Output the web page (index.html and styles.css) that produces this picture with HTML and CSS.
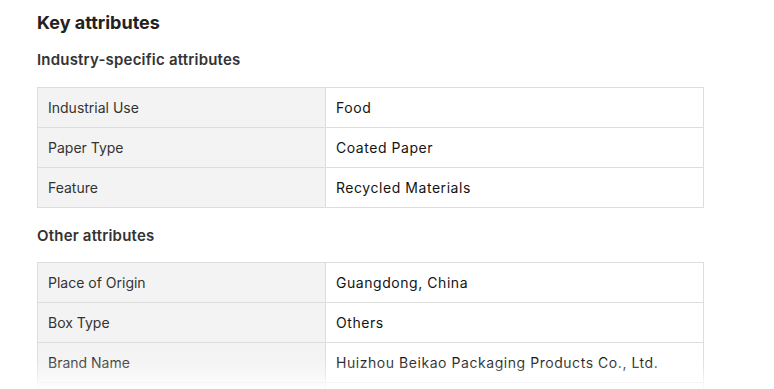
FILE: index.html
```html
<!DOCTYPE html>
<html>
<head>
<meta charset="utf-8">
<link rel="stylesheet" href="styles.css">
</head>
<body>
<div class="page">
  <h2 class="title">Key attributes</h2>
  <h3 class="subtitle first">Industry-specific attributes</h3>
  <table class="attrs">
    <tr><td class="key">Industrial Use</td><td class="val">Food</td></tr>
    <tr><td class="key">Paper Type</td><td class="val">Coated Paper</td></tr>
    <tr><td class="key">Feature</td><td class="val">Recycled Materials</td></tr>
  </table>
  <h3 class="subtitle">Other attributes</h3>
  <table class="attrs">
    <tr><td class="key">Place of Origin</td><td class="val">Guangdong, China</td></tr>
    <tr><td class="key">Box Type</td><td class="val">Others</td></tr>
    <tr><td class="key">Brand Name</td><td class="val">Huizhou Beikao Packaging Products Co., Ltd.</td></tr>
    <tr><td class="key"></td><td class="val"></td></tr>
  </table>
  <div class="fade"></div>
</div>
</body>
</html>
```
FILE: styles.css
```css
html, body {
  margin: 0;
  padding: 0;
  background: #fff;
}
.page {
  position: relative;
  height: 389px;
  overflow: hidden;
  padding: 0 0 0 37px;
  font-family: Inter, "Noto Sans", sans-serif;
  color: #222;
}
.title {
  margin: 0;
  padding-top: 11px;
  font-size: 18px;
  line-height: 24px;
  font-weight: 700;
  color: #222;
}
.subtitle {
  margin: 0;
  font-size: 15px;
  line-height: 20px;
  font-weight: 600;
  color: #333;
  letter-spacing: 0.2px;
  padding-top: 18px;
  padding-bottom: 16px;
}
.subtitle.first {
  padding-top: 15px;
  padding-bottom: 17px;
}
.attrs {
  border-collapse: collapse;
  width: 667px;
  table-layout: fixed;
  font-size: 14px;
}
.attrs td {
  border: 1px solid #ddd;
  height: 39px;
  padding: 0 10px;
  vertical-align: middle;
}
.attrs .key {
  width: 267px;
  background: #f3f3f3;
  color: #333;
  font-weight: 400;
}
.attrs .val {
  color: #141414;
  font-weight: 400;
  letter-spacing: 0.55px;
}
.fade {
  position: absolute;
  left: 0;
  right: 0;
  bottom: 0;
  height: 32px;
  background: linear-gradient(to bottom, rgba(255,255,255,0) 0%, rgba(255,255,255,0.3) 45%, rgba(255,255,255,0.95) 100%);
}
```
